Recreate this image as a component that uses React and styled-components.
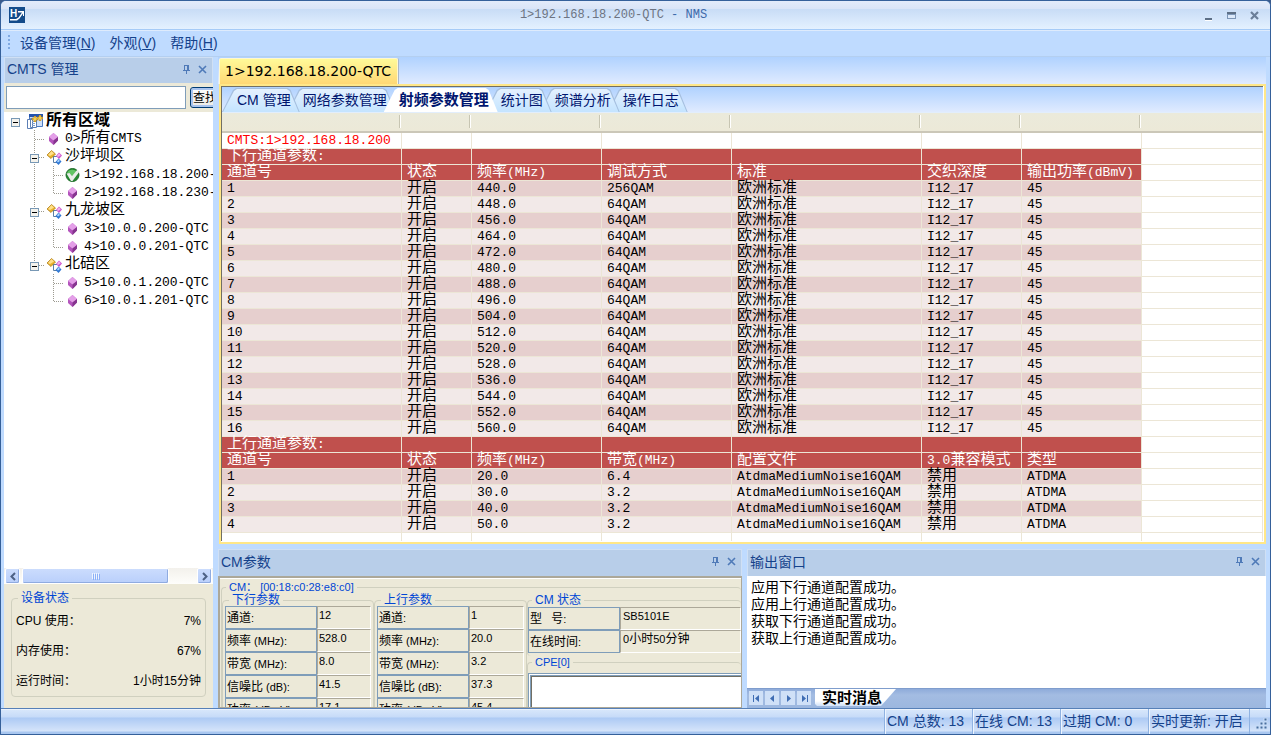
import React, { useState } from 'react';
import styled, { createGlobalStyle, css, ThemeProvider } from 'styled-components';

const theme = {
  sans: '"Liberation Sans", "Noto Sans CJK SC", sans-serif',
  mono: '"Liberation Mono", "Noto Sans CJK SC", monospace',
  navy: '#15428b',
  frame: '#bfdbff',
  caption: '#b8cee9',
  face: '#ece9d8',
  group: '#d0d0bf',
  legend: '#0046d5',
  edit: '#7f9db9',
  shadow: '#aca899',
};

const GlobalStyle = createGlobalStyle`
  * {
    box-sizing: border-box;
  }

  body {
    margin: 0;
    background: #3a5a8c;
  }

  button, input {
    font: inherit;
    color: inherit;
    margin: 0;
    padding: 0;
  }
`;

/* window */

const Window = styled.div`
  display: flex;
  flex-direction: column;
  height: 100vh;
  overflow: hidden;
  border: 1px solid #35609a;
  border-radius: 6px 6px 0 0;
  background: ${({ theme }) => theme.frame};
  color: #000;
  font-family: ${({ theme }) => theme.sans};
  font-size: 14px;
`;

const TitleBar = styled.header`
  display: flex;
  flex: none;
  align-items: center;
  height: 29px;
  padding: 0 8px;
  border-bottom: 1px solid #a6cbf7;
  background: linear-gradient(#e3ebfa 0, #d9e4f7 8px, #c8dcf6 8px, #e4f1ff 100%);
`;

const Title = styled.h1`
  flex: 1;
  margin: 0;
  color: #6d7482;
  font-family: ${({ theme }) => theme.mono};
  font-size: 12px;
  font-weight: normal;
  text-align: center;

  span {
    color: #3e6aaa;
  }
`;

const WindowButtons = styled.div`
  display: flex;
  gap: 9px;
`;

const IconButton = styled.button`
  display: flex;
  align-items: center;
  justify-content: center;
  width: 14px;
  height: 14px;
  border: 0;
  background: none;
`;

const MenuBar = styled.nav`
  display: flex;
  flex: none;
  align-items: center;
  gap: 14px;
  height: 27px;
  padding: 0 0 3px 7px;
  border-top: 1px solid #deebfc;
  border-bottom: 1px solid #b4cff0;
  color: ${({ theme }) => theme.navy};
`;

const Grip = styled.span`
  width: 2px;
  height: 14px;
  margin-right: -4px;
  background: repeating-linear-gradient(#7fa9e2 0 2px, transparent 2px 4px);
`;

const MenuItem = styled.button`
  border: 0;
  background: none;
`;

const Body = styled.div`
  display: flex;
  flex: 1;
  gap: 5px;
  min-height: 0;
  padding: 0 4px 0 3px;
`;

/* docked panels */

const Caption = styled.div`
  display: flex;
  flex: none;
  align-items: center;
  gap: 2px;
  height: ${({ $height }) => $height || 27}px;
  padding: 0 3px 3px 2px;
  border: 1px solid #d0e0f4;
  border-width: 1px 1px 0;
  background: ${({ theme }) => theme.caption};
  color: ${({ theme }) => theme.navy};
`;

const CaptionText = styled.h2`
  flex: 1;
  margin: 0;
  font-size: 14px;
  font-weight: normal;
  line-height: 20px;
`;

const Sidebar = styled.aside`
  display: flex;
  flex: none;
  flex-direction: column;
  width: 209px;
  overflow: hidden;
  background: ${({ theme }) => theme.face};
`;

const SearchRow = styled.form`
  display: flex;
  flex: none;
  align-items: center;
  gap: 4px;
  height: 29px;
  padding-left: 2px;
`;

const SearchInput = styled.input`
  flex: none;
  width: 180px;
  height: 23px;
  border: 1px solid ${({ theme }) => theme.edit};
  background: #fff;
`;

const SearchButton = styled.button`
  flex: none;
  width: 36px;
  height: 21px;
  border: 1px solid #003c74;
  border-radius: 3px;
  background: linear-gradient(#fff, #ecebe5);
  box-shadow: inset 0 0 0 2px #a9c4ee;
  font-size: 12px;
  line-height: 18px;
  text-align: left;
  text-indent: 2px;
  white-space: nowrap;
`;

const TreeView = styled.ul`
  flex: 1;
  min-height: 0;
  margin: 0;
  padding: 0 0 0 2px;
  overflow: hidden;
  background: #fff;
  list-style: none;
`;

const TreeRow = styled.li`
  display: flex;
  align-items: center;
  height: 18px;
  font-family: ${({ theme }) => theme.mono};
  font-size: 13px;
  font-weight: ${({ $bold }) => ($bold ? 'bold' : 'normal')};
  line-height: 18px;
  white-space: nowrap;
`;

const TreeIcon = styled.span`
  display: flex;
  flex: none;
  justify-content: center;
  width: 19px;
  margin-right: 2px;
`;

const Guide = styled.svg`
  flex: none;
  width: 19px;
  height: 18px;
`;

const Cjk = styled.span`
  font-size: ${({ $size }) => $size}px;
`;

const ScrollBar = styled.div`
  display: flex;
  flex: none;
  gap: 2px;
  height: 16px;
  padding: 0 1px;
  background: linear-gradient(#f3f1ec, #fefefb);
`;

const scrollFace = css`
  border: 1px solid #fff;
  border-radius: 2px;
  background: linear-gradient(#cbdcfd, #b9cffb);
  box-shadow: inset -1px -1px 0 #8fabe0;
`;

const ScrollButton = styled.button`
  ${scrollFace}
  display: flex;
  align-items: center;
  justify-content: center;
  width: 15px;
  height: 16px;
`;

const ScrollTrack = styled.div`
  flex: 1;
`;

const ScrollThumb = styled.div`
  ${scrollFace}
  display: flex;
  align-items: center;
  justify-content: center;
  width: 85%;
  height: 16px;
`;

const GroupBox = styled.fieldset`
  min-width: 0;
  margin: 0;
  padding: 0 2px;
  border: 1px solid ${({ theme }) => theme.group};
  border-radius: 4px;
`;

const Legend = styled.legend`
  margin-left: 4px;
  padding: 0 3px;
  color: ${({ theme }) => theme.legend};
  font-size: ${({ $size }) => $size || 12}px;
  line-height: 12px;
  white-space: pre;
`;

const DeviceArea = styled.section`
  flex: none;
  height: 124px;
  padding: 8px 7px 11px;
`;

const DeviceList = styled.dl`
  display: grid;
  grid-template-columns: auto 1fr;
  margin: 0;
  padding: 2px 2px 0;
  font-size: 12px;
  line-height: 30px;

  dd {
    margin: 0;
    text-align: right;
  }
`;

/* work area */

const Main = styled.main`
  display: flex;
  flex: 1;
  flex-direction: column;
  min-width: 0;
`;

const DocumentTabs = styled.div`
  display: flex;
  flex: none;
  align-items: flex-end;
  height: 27px;
  padding-left: 1px;
  background: linear-gradient(#b0d2ff, #e0ebff);
`;

const DocumentTab = styled.button`
  height: 26px;
  padding: 0 6px 2px 5px;
  border: 1px solid #fff8d0;
  border-bottom: 0;
  border-radius: 2px 2px 0 0;
  background: linear-gradient(#fffa98, #ffd875);
  box-shadow: 1px 0 0 #a9b7c9;
  font-family: "DejaVu Sans", sans-serif;
  font-size: 14px;
  white-space: nowrap;
`;

const Document = styled.section`
  display: flex;
  flex: 1;
  flex-direction: column;
  min-height: 0;
  margin-left: 1px;
  overflow: hidden;
  border: 2px solid #ffe788;
  background: #fff;
`;

const DocumentInner = styled.div`
  display: flex;
  flex: 1;
  flex-direction: column;
  min-height: 0;
  margin: 0 1px 1px 0;
  border: 1px solid #716f64;
  border-width: 1px 0 0 1px;
`;

const PageTabs = styled.div`
  display: flex;
  flex: none;
  align-items: flex-end;
  height: 26px;
  border-bottom: 1px solid #e2eefc;
  background: linear-gradient(#b0d2ff, #e0ebff);
`;

const tabShape = 'polygon(0 100%, 11px 2px, 14px 0, calc(100% - 12px) 0, calc(100% - 9px) 2px, 100% 100%)';

const PageTab = styled.button`
  position: relative;
  z-index: ${({ $active, $order }) => ($active ? 20 : $order)};
  height: 24px;
  margin-right: -12px;
  padding: 0 9px 0 15px;
  border: 0;
  background: ${({ $active }) => ($active ? '#fff' : '#a5bfdf')};
  clip-path: ${tabShape};
  color: #00156e;
  font-size: ${({ $active }) => ($active ? 15 : 14)}px;
  font-weight: ${({ $active }) => ($active ? 'bold' : 'normal')};
  line-height: 24px;
  white-space: nowrap;
  isolation: isolate;

  &::before {
    content: '';
    position: absolute;
    inset: 1px 1px 0;
    z-index: -1;
    background: ${({ $active }) => ($active ? '#fff' : 'linear-gradient(#e4f1ff, #c4e4ff)')};
    clip-path: ${tabShape};
  }
`;

const GridArea = styled.div`
  flex: 1;
  min-height: 0;
  overflow: hidden;
`;

const Grid = styled.table`
  width: 100%;
  border-spacing: 0;
  table-layout: fixed;
  font-family: ${({ theme }) => theme.mono};
  font-size: 13px;
`;

const GridHead = styled.th`
  height: 20px;
  padding: 2px 0 3px;
  border-bottom: 2px solid #cbc7b8;
  background: linear-gradient(#ebeadb, #ece9d8);

  &::after {
    content: '';
    display: block;
    height: 13px;
    margin-right: 1px;
    border-right: 1px solid #fff;
    box-shadow: inset -1px 0 0 #c7c5b2;
  }

  &:last-child::after {
    border: 0;
    box-shadow: none;
  }
`;

const rowColors = {
  plain: '#fff',
  head: '#c0504d',
  odd: '#e6cfce',
  even: '#f2e9e8',
};

const textColors = {
  plain: '#f00',
  head: '#fff',
};

const GridRow = styled.tr`
  color: ${({ $kind }) => textColors[$kind] || '#000'};

  td {
    height: 16px;
    padding: 0 0 0 5px;
    overflow: visible;
    border: 1px solid #ece6d6;
    border-width: 0 1px 1px 0;
    background: ${({ $kind }) => rowColors[$kind]};
    line-height: 15px;
    white-space: nowrap;
  }

  td:last-child {
    background: #fff;
  }
`;

const Docks = styled.div`
  display: grid;
  flex: none;
  grid-template-columns: 524fr 519fr;
  gap: 5px;
  height: 159px;
  margin-top: 5px;
`;

const Dock = styled.section`
  display: flex;
  flex-direction: column;
  min-width: 0;
  overflow: hidden;
`;

const CmArea = styled.div`
  flex: 1;
  min-height: 0;
  padding: 3px 0 0 1px;
  overflow: hidden;
  border: 1px solid ${({ theme }) => theme.shadow};
  border-width: 2px 1px 1px 2px;
  background: ${({ theme }) => theme.face};
  box-shadow: inset 0 1px 0 #fff;
`;

const CmGroup = styled(GroupBox)`
  padding: 1px 0 0;
  border-right: 0;
  border-bottom: 0;
`;

const CmColumns = styled.div`
  display: grid;
  grid-template-columns: 152px 153px 1fr;
  align-items: start;
`;

const FieldList = styled.dl`
  display: grid;
  grid-template-columns: 92px 1fr;
  grid-auto-rows: 23px;
  margin: 0;
  padding-bottom: 3px;
  font-size: 11px;

  dt {
    padding-left: 1px;
    border: 1px solid ${({ theme }) => theme.edit};
    line-height: 22px;
    white-space: pre;
  }

  dd {
    margin: 0;
    padding-left: ${({ $indent }) => $indent || 1}px;
    border: 1px solid ${({ theme }) => theme.shadow};
    border-right-color: #fff;
    border-bottom-color: #fff;
    line-height: 16px;
    white-space: nowrap;
  }
`;

const CpeBox = styled.textarea`
  display: block;
  width: 100%;
  height: 60px;
  margin-top: 4px;
  border: 3px double ${({ theme }) => theme.edit};
  border-right: 0;
  background: #fff;
  box-shadow: inset 1px 1px 0 #716f64;
  resize: none;
`;

const OutputLog = styled.ul`
  flex: 1;
  min-height: 0;
  margin: 0;
  padding: 3px 4px;
  overflow: hidden;
  background: #fff;
  line-height: 17px;
  list-style: none;
`;

const OutputBar = styled.div`
  display: flex;
  flex: none;
  align-items: flex-start;
  gap: 2px;
  height: 20px;
  padding-left: 2px;
  border-top: 1px solid #7f9dcd;
  background: linear-gradient(#8eabda, #a3bce2 6px, #9cb7df);
`;

const NavButton = styled.button`
  display: flex;
  align-items: center;
  justify-content: center;
  width: 14px;
  height: 14px;
  margin-top: 2px;
  border: 0;
  background: #cfe0f7;
`;

const OutputTab = styled.button`
  height: 17px;
  margin-left: 2px;
  padding: 0 14px 0 7px;
  border: 0;
  background: linear-gradient(#fff 12px, #cfe0f7);
  clip-path: polygon(0 0, 100% 0, calc(100% - 15px) 100%, 2px 100%, 0 15px);
  font-size: 15px;
  font-weight: bold;
  line-height: 15px;
`;

const StatusBar = styled.footer`
  display: flex;
  flex: none;
  justify-content: flex-end;
  height: 26px;
  padding-right: 2px;
  border-top: 1px solid #5680b8;
  background: linear-gradient(#fff 0, #d7e6fb 1px, #c6dbf8 8px, #adcaf4 9px, #d5e4fa 22px, #a9c7f0 23px);
  color: ${({ theme }) => theme.navy};
`;

const StatusCell = styled.span`
  width: ${({ $width }) => $width}px;
  padding-left: 2px;
  border-left: 1px solid #8fb2e2;
  box-shadow: inset 1px 0 0 #eef5ff;
  line-height: 24px;
  white-space: nowrap;
`;

const SizeGrip = styled.span`
  display: flex;
  align-items: flex-end;
  justify-content: flex-end;
  width: 19px;
  padding-bottom: 4px;
  border-left: 1px solid #8fb2e2;
`;

const regions = [
  { guides: ['toggle'], icon: 'root', text: '所有区域', bold: true },
  { guides: ['blank', 'tee'], icon: 'gem', text: '0>所有CMTS' },
  { guides: ['blank', 'branch'], icon: 'group', text: '沙坪坝区' },
  { guides: ['blank', 'line', 'tee'], icon: 'check', text: '1>192.168.18.200-QTC' },
  { guides: ['blank', 'line', 'end'], icon: 'gem', text: '2>192.168.18.230-QTC' },
  { guides: ['blank', 'branch'], icon: 'group', text: '九龙坡区' },
  { guides: ['blank', 'line', 'tee'], icon: 'gem', text: '3>10.0.0.200-QTC' },
  { guides: ['blank', 'line', 'end'], icon: 'gem', text: '4>10.0.0.201-QTC' },
  { guides: ['blank', 'lastBranch'], icon: 'group', text: '北碚区' },
  { guides: ['blank', 'blank', 'tee'], icon: 'gem', text: '5>10.0.1.200-QTC' },
  { guides: ['blank', 'blank', 'end'], icon: 'gem', text: '6>10.0.1.201-QTC' },
];

const pageTabs = ['CM 管理', '网络参数管理', '射频参数管理', '统计图', '频谱分析', '操作日志'];

const columns = [180, 70, 130, 130, 190, 100, 120];

const downstream = Array.from({ length: 16 }, (_, i) => [
  String(i + 1),
  '开启',
  `${440 + i * 8}.0`,
  i === 0 ? '256QAM' : '64QAM',
  '欧洲标准',
  'I12_17',
  '45',
]);

const upstream = [
  ['1', '20.0', '6.4'],
  ['2', '30.0', '3.2'],
  ['3', '40.0', '3.2'],
  ['4', '50.0', '3.2'],
].map(([id, freq, width]) => [id, '开启', freq, width, 'AtdmaMediumNoise16QAM', '禁用', 'ATDMA']);

const stripe = (cells, i) => ({ kind: i % 2 ? 'even' : 'odd', cells });

const gridRows = [
  { kind: 'plain', cells: ['CMTS:1>192.168.18.200'] },
  { kind: 'head', cells: ['下行通道参数:'] },
  {
    kind: 'head',
    cells: ['通道号', '状态', '频率(MHz)', '调试方式', '标准', '交织深度', '输出功率(dBmV)'],
  },
  ...downstream.map(stripe),
  { kind: 'head', cells: ['上行通道参数:'] },
  {
    kind: 'head',
    cells: ['通道号', '状态', '频率(MHz)', '带宽(MHz)', '配置文件', '3.0兼容模式', '类型'],
  },
  ...upstream.map(stripe),
  { kind: 'plain', cells: [] },
];

const downFields = [
  ['通道:', '12'],
  ['频率 (MHz):', '528.0'],
  ['带宽 (MHz):', '8.0'],
  ['信噪比 (dB):', '41.5'],
  ['功率 (dBmV):', '17.1'],
];

const upFields = [
  ['通道:', '1'],
  ['频率 (MHz):', '20.0'],
  ['带宽 (MHz):', '3.2'],
  ['信噪比 (dB):', '37.3'],
  ['功率 (dBmV):', '45.4'],
];

const logLines = [
  '应用下行通道配置成功。',
  '应用上行通道配置成功。',
  '获取下行通道配置成功。',
  '获取上行通道配置成功。',
];

// Chinese runs are set larger than the latin text beside them
const Mixed = ({ text, size }) =>
  text
    .split(/([\u3000-\u9fff\uff00-\uffef]+)/)
    .filter(Boolean)
    .map((part, i) =>
      /[\u3000-\u9fff\uff00-\uffef]/.test(part) ? (
        <Cjk key={i} $size={size}>
          {part}
        </Cjk>
      ) : (
        part
      ),
    );

const Logo = () => (
  <svg width="16" height="16" viewBox="0 0 16 16">
    <rect width="16" height="16" fill="#134b8a" />
    <text x="1" y="10" fill="#fff" fontFamily="Liberation Sans" fontSize="10" fontWeight="bold">
      H
    </text>
    <path d="M9 4h6v5h-1V6.500l-3.500 5L8 13.500H1V12h6l2.500-1.500L13 5.500H9z" fill="#fff" />
  </svg>
);

const MinimizeIcon = () => (
  <svg width="12" height="12">
    <path d="M2 9h7v2H2z" fill="#5d6f86" />
    <path d="M2 11h7v1H2z" fill="#fff" />
  </svg>
);

const MaximizeIcon = () => (
  <svg width="12" height="12">
    <path d="M1 3h9v7H1z" fill="#7c95b6" />
    <path d="M1 3h9v2H1z" fill="#5d6f86" />
    <path d="M2 6h7v3H2z" fill="#dce9fa" />
  </svg>
);

const CloseWindowIcon = () => (
  <svg width="12" height="12">
    <path d="M2 3l7 7M9 3l-7 7" stroke="#6c7f99" strokeWidth="2.2" />
  </svg>
);

const PinIcon = () => (
  <svg width="9" height="9" shapeRendering="crispEdges">
    <path d="M2 0h5v5h1v1H5v3H4V6H1V5h1zM3 1v4h2V1z" fill="#4f7ab8" fillRule="evenodd" />
  </svg>
);

const CloseIcon = () => (
  <svg width="9" height="9">
    <path d="M1 1l7 7M8 1l-7 7" stroke="#4f7ab8" strokeWidth="1.6" />
  </svg>
);

const guidePaths = {
  tee: 'M9.5 0V18M10 9.5H19',
  end: 'M9.5 0V9M9.5 9.5H19',
  line: 'M9.5 0V18',
  branch: 'M9.5 0V18M10 9.5H19',
  lastBranch: 'M9.5 0V9M10 9.5H19',
};

const TreeGuide = ({ kind }) => (
  <Guide shapeRendering="crispEdges">
    {guidePaths[kind] && (
      <path d={guidePaths[kind]} stroke="#9c9a90" strokeDasharray="1 1" fill="none" />
    )}
    {['toggle', 'branch', 'lastBranch'].includes(kind) && (
      <>
        <rect x="5.5" y="6.5" width="8" height="8" fill="#f4f2ec" stroke="#7898b5" />
        <path d="M7 10.5h5" stroke="#000" />
      </>
    )}
  </Guide>
);

const RootIcon = () => (
  <svg width="16" height="16" viewBox="0 0 16 16">
    <path d="M2.500 1.500h13v12h-13z" fill="#cfe0fa" stroke="#4d7cc4" />
    <path d="M2 1h14v3H2z" fill="#2454ad" />
    <path d="M.5 6.500h5v9h-5zM3.500 5.500h6v9h-6z" fill="#fff" stroke="#5c7fb5" />
    <path d="M5 8.500h3M5 10.500h3M5 12.500h3" stroke="#7fa0cf" />
    <path d="M8 3v6M5 6h6M13 2v6M10 5h6" stroke="#b97f08" strokeWidth="2.4" />
    <path d="M8 3.500v5M5.500 6h5M13 2.500v5M10.500 5h5" stroke="#ffe36a" strokeWidth="1.2" />
  </svg>
);

const GemIcon = () => (
  <svg width="9" height="12" viewBox="0 0 9 12">
    <path d="M4.500 0L9 4v3.500L4.500 12 0 8V4z" fill="#b455bd" />
    <path d="M4.500 0L9 4 4.500 7.500 0 4z" fill="#e49fe8" />
    <path d="M4.500 7.500L9 4v3.500L4.500 12z" fill="#86358f" />
  </svg>
);

const GroupIcon = () => (
  <svg width="16" height="15" viewBox="0 0 16 15">
    <path d="M6 6.500h5M7.500 7v5.500h4" stroke="#5b7fa6" fill="none" />
    <path d="M5.500 .5L9.500 4 5 8.500 1 5z" fill="#eab22a" stroke="#a87510" strokeWidth=".7" />
    <path d="M5.500 1L8 3.500 4 6 2 5z" fill="#ffe08a" />
    <path d="M13 2.500l3 3-3 3.500-3-3z" fill="#cf56cd" />
    <path d="M13 3.200l1.800 2L12 7l-1-1z" fill="#f0b4ee" />
    <path d="M12.500 8.500l3 3-3 3.500-3-3z" fill="#2f77d4" />
    <path d="M12.500 9.200l1.500 1.800-2 1.500-1-1z" fill="#a9d3ff" />
  </svg>
);

const CheckIcon = () => (
  <svg width="15" height="14" viewBox="0 0 15 14">
    <circle cx="7.500" cy="7" r="6.500" fill="#258a30" stroke="#1c6a28" />
    <path d="M2 4.500a6 5 0 0 1 10-1L7 8 4.500 5.500z" fill="#62c464" />
    <path d="M1.500 5.500l3-.5L7 8l5.500-6.500L14.500 3.500 7.500 13H6z" fill="#e9ede9" />
  </svg>
);

const treeIcons = { root: RootIcon, gem: GemIcon, group: GroupIcon, check: CheckIcon };

const navPaths = [
  ['第一个', 'M1 1h1v7H1zM7 1v7L3 4.500z'],
  ['上一个', 'M6 1v7L2 4.500z'],
  ['下一个', 'M3 1v7l4-3.500z'],
  ['最后一个', 'M2 1v7l4-3.500zM7 1h1v7H7z'],
];

const PanelCaption = ({ title, height }) => (
  <Caption $height={height}>
    <CaptionText>{title}</CaptionText>
    <IconButton type="button" aria-label="自动隐藏">
      <PinIcon />
    </IconButton>
    <IconButton type="button" aria-label="关闭">
      <CloseIcon />
    </IconButton>
  </Caption>
);

const Fields = ({ items, indent }) => (
  <FieldList $indent={indent}>
    {items.map(([label, value]) => (
      <React.Fragment key={label}>
        <dt>
          <Mixed text={label} size={12} />
        </dt>
        <dd>
          <Mixed text={value} size={12} />
        </dd>
      </React.Fragment>
    ))}
  </FieldList>
);

const CmtsPanel = () => (
  <Sidebar>
    <PanelCaption title="CMTS 管理" height={26} />
    <SearchRow onSubmit={e => e.preventDefault()}>
      <SearchInput type="text" aria-label="查找" />
      <SearchButton type="submit">查找</SearchButton>
    </SearchRow>
    <TreeView>
      {regions.map(({ guides, icon, text, bold }) => {
        const Icon = treeIcons[icon];
        return (
          <TreeRow key={text} $bold={bold}>
            {guides.map((kind, i) => (
              <TreeGuide key={i} kind={kind} />
            ))}
            <TreeIcon>
              <Icon />
            </TreeIcon>
            <span>
              <Mixed text={text} size={bold ? 16 : 15} />
            </span>
          </TreeRow>
        );
      })}
    </TreeView>
    <ScrollBar>
      <ScrollButton type="button" aria-label="向左">
        <svg width="8" height="9">
          <path d="M6 1L2.500 4.500 6 8" fill="none" stroke="#4d6185" strokeWidth="2" />
        </svg>
      </ScrollButton>
      <ScrollTrack>
        <ScrollThumb>
          <svg width="8" height="7" shapeRendering="crispEdges">
            <path d="M.5 0v6M2.500 0v6M4.500 0v6M6.500 0v6" stroke="#eef4fe" />
            <path d="M1.500 1v6M3.500 1v6M5.500 1v6M7.500 1v6" stroke="#8cb0f8" />
          </svg>
        </ScrollThumb>
      </ScrollTrack>
      <ScrollButton type="button" aria-label="向右">
        <svg width="8" height="9">
          <path d="M2 1l3.500 3.500L2 8" fill="none" stroke="#4d6185" strokeWidth="2" />
        </svg>
      </ScrollButton>
    </ScrollBar>
    <DeviceArea>
      <GroupBox>
        <Legend>设备状态</Legend>
        <DeviceList>
          <dt>CPU 使用：</dt>
          <dd>7%</dd>
          <dt>内存使用：</dt>
          <dd>67%</dd>
          <dt>运行时间：</dt>
          <dd>1小时15分钟</dd>
        </DeviceList>
      </GroupBox>
    </DeviceArea>
  </Sidebar>
);

const ChannelGrid = () => (
  <GridArea>
    <Grid>
      <colgroup>
        {columns.map((width, i) => (
          <col key={i} width={width} />
        ))}
        <col />
      </colgroup>
      <thead>
        <tr>
          {[...columns, 0].map((_, i) => (
            <GridHead key={i} />
          ))}
        </tr>
      </thead>
      <tbody>
        {gridRows.map(({ kind, cells }, r) => (
          <GridRow key={r} $kind={kind}>
            {[...columns, 0].map((_, c) => (
              <td key={c}>{cells[c] && <Mixed text={cells[c]} size={15} />}</td>
            ))}
          </GridRow>
        ))}
      </tbody>
    </Grid>
  </GridArea>
);

const CmDock = () => (
  <Dock>
    <PanelCaption title="CM参数" />
    <CmArea>
      <CmGroup>
        <Legend $size={11}>CM： [00:18:c0:28:e8:c0]</Legend>
        <CmColumns>
          <GroupBox>
            <Legend>下行参数</Legend>
            <Fields items={downFields} />
          </GroupBox>
          <GroupBox>
            <Legend>上行参数</Legend>
            <Fields items={upFields} />
          </GroupBox>
          <div>
            <CmGroup>
              <Legend>CM 状态</Legend>
              <Fields
                indent={2}
                items={[
                  ['型   号:', 'SB5101E'],
                  ['在线时间:', '0小时50分钟'],
                ]}
              />
            </CmGroup>
            <CmGroup>
              <Legend $size={11}>CPE[0]</Legend>
              <CpeBox aria-label="CPE" readOnly />
            </CmGroup>
          </div>
        </CmColumns>
      </CmGroup>
    </CmArea>
  </Dock>
);

const OutputDock = () => (
  <Dock>
    <PanelCaption title="输出窗口" />
    <OutputLog>
      {logLines.map(line => (
        <li key={line}>{line}</li>
      ))}
    </OutputLog>
    <OutputBar>
      {navPaths.map(([label, d]) => (
        <NavButton key={label} type="button" aria-label={label}>
          <svg width="9" height="9">
            <path d={d} fill="#3f6db3" />
          </svg>
        </NavButton>
      ))}
      <OutputTab type="button">实时消息</OutputTab>
    </OutputBar>
  </Dock>
);

const App = () => {
  const [activeTab, setActiveTab] = useState(2);

  return (
    <ThemeProvider theme={theme}>
      <GlobalStyle />
      <Window>
        <TitleBar>
          <Logo />
          <Title>
            1&gt;192.168.18.200-QTC <span>- NMS</span>
          </Title>
          <WindowButtons>
            <IconButton type="button" aria-label="最小化">
              <MinimizeIcon />
            </IconButton>
            <IconButton type="button" aria-label="最大化">
              <MaximizeIcon />
            </IconButton>
            <IconButton type="button" aria-label="关闭">
              <CloseWindowIcon />
            </IconButton>
          </WindowButtons>
        </TitleBar>
        <MenuBar>
          <Grip />
          <MenuItem type="button">
            设备管理(<u>N</u>)
          </MenuItem>
          <MenuItem type="button">
            外观(<u>V</u>)
          </MenuItem>
          <MenuItem type="button">
            帮助(<u>H</u>)
          </MenuItem>
        </MenuBar>
        <Body>
          <CmtsPanel />
          <Main>
            <DocumentTabs>
              <DocumentTab type="button">1&gt;192.168.18.200-QTC</DocumentTab>
            </DocumentTabs>
            <Document>
              <DocumentInner>
                <PageTabs>
                  {pageTabs.map((name, i) => (
                    <PageTab
                      key={name}
                      type="button"
                      $active={i === activeTab}
                      $order={10 - i}
                      onClick={() => setActiveTab(i)}
                    >
                      {name}
                    </PageTab>
                  ))}
                </PageTabs>
                <ChannelGrid />
              </DocumentInner>
            </Document>
            <Docks>
              <CmDock />
              <OutputDock />
            </Docks>
          </Main>
        </Body>
        <StatusBar>
          <StatusCell $width={88}>CM 总数: 13</StatusCell>
          <StatusCell $width={88}>在线 CM: 13</StatusCell>
          <StatusCell $width={88}>过期 CM: 0</StatusCell>
          <StatusCell $width={101}>实时更新: 开启</StatusCell>
          <SizeGrip>
            <svg width="12" height="12">
              <path
                d="M8 0h3v3H8zM4 4h3v3H4zM8 4h3v3H8zM0 8h3v3H0zM4 8h3v3H4zM8 8h3v3H8z"
                fill="#4a6f9f"
                stroke="#c6dcf6"
              />
            </svg>
          </SizeGrip>
        </StatusBar>
      </Window>
    </ThemeProvider>
  );
};

export default App;
